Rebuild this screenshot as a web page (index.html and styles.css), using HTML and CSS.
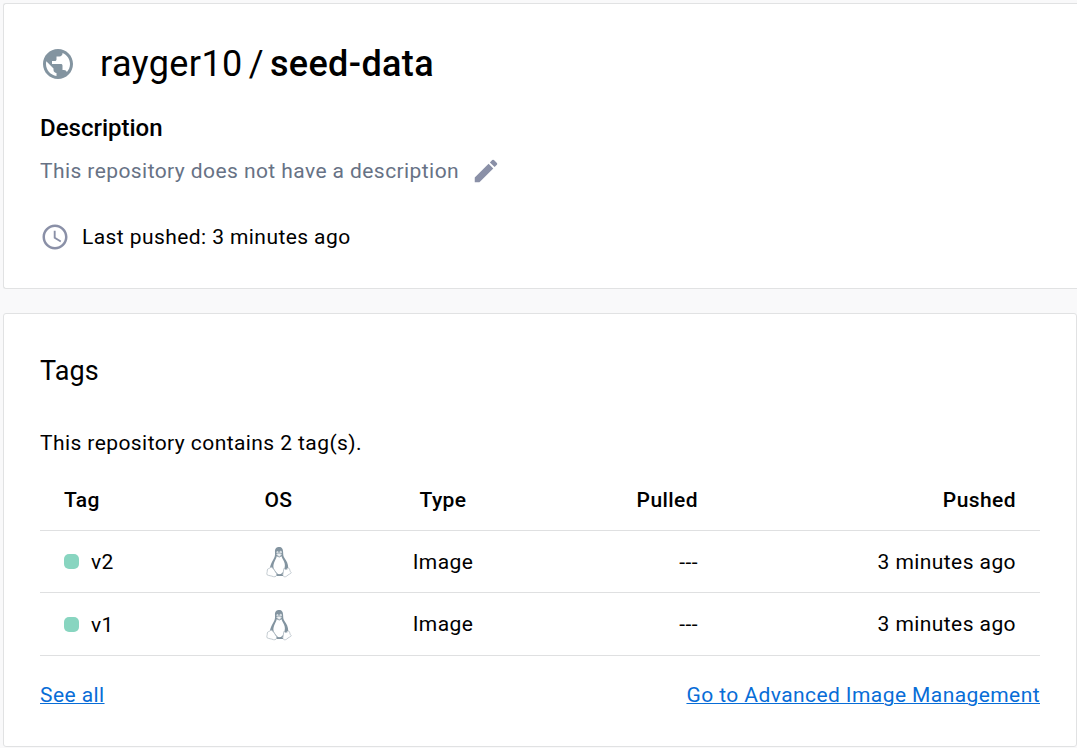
FILE: index.html
```html
<!DOCTYPE html>
<html lang="en">
<head>
<meta charset="utf-8">
<title>rayger10/seed-data</title>
<link rel="stylesheet" href="styles.css">
</head>
<body>
<svg class="defs" aria-hidden="true">
  <symbol id="tux" viewBox="0 0 26 32">
    <path fill="#8394a0" d="M13 1C9.900 1 8.800 3.200 9 6.200C9.200 9.500 8.800 11 7.300 13.400C5.500 16.200 4.200 19.500 3.800 22.500L8 27.500L11 29.500H16L18.500 25L22.200 21.500C22.200 18 20.600 14.800 18.800 12.500C17.300 10.500 17.200 9 17.100 6C17 3 16 1 13 1Z"/>
    <path fill="#fff" d="M10.700 10.200C10.300 12.500 8.800 14.600 8 17C7.100 19.500 6.900 22 9 24.500C10.300 26.300 11.300 28.200 12.800 28.200C15.500 28.300 17.300 26.600 18 23.500C19.200 20.800 19.200 18.500 18 15.600C17 13.300 16 12 15.500 10.300L13.300 11.600Z"/>
    <ellipse cx="11.500" cy="6.200" rx="1" ry="1.300" fill="#d5dce0"/>
    <ellipse cx="14.700" cy="6.200" rx="1.200" ry="1.400" fill="#d5dce0"/>
    <path fill="#eef1f3" stroke="#bac4ca" stroke-width=".5" d="M10.300 8.300L13 7.200L15.800 8.500L13.200 10.800Z"/>
    <path fill="#fff" stroke="#b2bdc4" stroke-width=".8" d="M4.500 21.500C3.400 22.700 1.300 22.500 1.300 24C1.500 25.800 .4 27.500 1 28.700C2.500 29.800 5.500 29.700 7.500 30.700C9.500 31.200 11.300 29.700 10.600 27.700C9.400 25.800 8 23.500 6.600 21.900C5.800 21.100 5 21 4.500 21.500Z"/>
    <path fill="#fff" stroke="#b2bdc4" stroke-width=".8" d="M17.800 22.500C17.300 24.500 17.500 26.500 16.900 28.500C16.700 30.800 19 31.500 20.800 30C22 28.500 25.200 27.800 25.200 26.600C23.600 25.300 24.100 23.500 23 22.200C22 21.300 21.900 23.500 19.900 23.600C18.800 23.600 18.500 22.300 17.800 22.500Z"/>
    <path fill="#8394a0" d="M10.600 28.800H17V30H10.900Z"/>
  </symbol>
</svg>
<main class="page">
  <section class="card summary">
    <h1 class="title">
      <svg class="globe" viewBox="0 0 24 24"><path d="M12 2C6.480 2 2 6.480 2 12s4.480 10 10 10 10-4.480 10-10S17.520 2 12 2zm-1 17.930c-3.950-.49-7-3.850-7-7.930 0-.62.080-1.210.21-1.790L9 15v1c0 1.100.9 2 2 2v1.930zm6.900-2.540c-.26-.81-1-1.390-1.900-1.390h-1v-3c0-.55-.45-1-1-1H8v-2h2c.55 0 1-.45 1-1V7h2c1.100 0 2-.9 2-2v-.41c2.930 1.190 5 4.060 5 7.410 0 2.080-.8 3.970-2.100 5.390z"/></svg>
      <span class="owner">rayger10</span><span class="slash">/</span><span class="repo">seed-data</span>
    </h1>
    <h2 class="subtitle">Description</h2>
    <div class="description">
      <span>This repository does not have a description</span>
      <svg class="pencil" viewBox="0 0 24 24"><path d="M3 17.250V21h3.750L17.810 9.940l-3.750-3.750L3 17.250zM20.710 7.040a1 1 0 0 0 0-1.410l-2.340-2.340a1 1 0 0 0-1.410 0l-1.830 1.830 3.750 3.750 1.830-1.830z"/></svg>
    </div>
    <div class="pushed">
      <svg class="clock" viewBox="0 0 24 24"><path d="M11.990 2C6.470 2 2 6.480 2 12s4.470 10 9.990 10C17.520 22 22 17.520 22 12S17.520 2 11.990 2zM12 20c-4.420 0-8-3.580-8-8s3.580-8 8-8 8 3.580 8 8-3.580 8-8 8zm.5-13H11v6l5.250 3.150.75-1.230-4.500-2.670z"/></svg>
      <span>Last pushed: 3 minutes ago</span>
    </div>
  </section>
  <section class="card tags">
    <h2 class="tags-title">Tags</h2>
    <p class="tags-count">This repository contains 2 tag(s).</p>
    <div class="row head">
      <span class="tag">Tag</span><span class="os">OS</span><span class="type">Type</span><span class="pulled">Pulled</span><span class="when">Pushed</span>
    </div>
    <div class="row">
      <span class="tag"><i class="dot"></i>v2</span><span class="os"><svg class="tux"><use href="#tux"/></svg></span><span class="type">Image</span><span class="pulled">---</span><span class="when">3 minutes ago</span>
    </div>
    <div class="row last">
      <span class="tag"><i class="dot"></i>v1</span><span class="os"><svg class="tux"><use href="#tux"/></svg></span><span class="type">Image</span><span class="pulled">---</span><span class="when">3 minutes ago</span>
    </div>
    <div class="links">
      <a href="#">See all</a>
      <a href="#">Go to Advanced Image Management</a>
    </div>
  </section>
</main>
</body>
</html>
```
FILE: styles.css
```css
* { box-sizing: border-box; }
body {
  margin: 0;
  background: #f9f9fa;
  color: #000;
  font: 400 21px/30px Roboto, sans-serif;
  letter-spacing: 0.42px;
  overflow: hidden;
}
h1, h2, p { margin: 0; font-weight: 400; }
svg { display: block; flex: none; }
.defs { display: none; }
.page { display: flex; flex-direction: column; gap: 24px; padding: 3px 0 0 3px; }
.card { background: #fff; border: 1px solid #e1e2e3; border-radius: 3px; padding: 0 36px; }
.summary { height: 286px; border-right: 0; border-radius: 3px 0 0 3px; padding-top: 36px; }
.title { display: flex; align-items: center; height: 48px; font-size: 36px; line-height: 48px; letter-spacing: 0.38px; }
.globe { width: 36px; height: 36px; fill: #8394a0; margin-right: 24px; }
.slash { margin: 0 6px; }
.repo { font-weight: 500; }
.subtitle { margin-top: 22px; height: 36px; font-size: 24px; line-height: 36px; font-weight: 500; letter-spacing: 0; }
.description { display: flex; align-items: center; gap: 12px; margin-top: 10px; height: 30px; color: #677285; }
.pencil { width: 30px; height: 30px; fill: #8a90a7; }
.pushed { display: flex; align-items: center; gap: 12px; margin-top: 36px; height: 30px; }
.clock { width: 30px; height: 30px; fill: #8a90a7; }
.tags { width: 1074px; height: 434px; padding-top: 39px; }
.tags-title { font-size: 27px; line-height: 36px; letter-spacing: 0.1px; }
.tags-count { margin-top: 39px; }
.row { display: grid; grid-template-columns: 164px 124px 182px 164px 1fr; align-items: center; height: 62px; padding: 0 24px; border-bottom: 1px solid #dfe0e1; }
.head { height: 60px; margin-top: 13px; padding-bottom: 2px; font-weight: 500; }
.last { height: 63px; }
.tag { display: flex; align-items: center; gap: 12px; }
.last .tag, .last .os { padding-top: 1px; }
.dot { width: 15px; height: 15px; border-radius: 5px; background: #88d5c0; }
.last .dot { margin-top: -1px; }
.os, .type { display: flex; justify-content: center; }
.os { width: 101px; }
.tux { width: 26px; height: 32px; }
.pulled, .when { text-align: right; }
.links { display: flex; justify-content: space-between; margin-top: 24px; }
.links a { color: #086dd7; text-decoration: underline; text-decoration-thickness: 1px; }
```
